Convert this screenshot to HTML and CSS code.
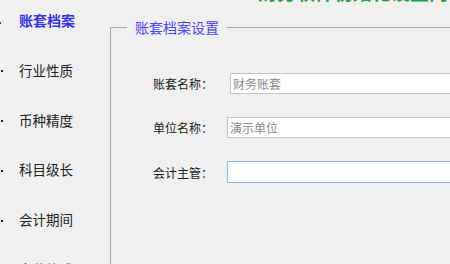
FILE: index.html
```html
<!DOCTYPE html>
<html lang="zh-CN">
<head>
<meta charset="utf-8">
<link rel="stylesheet" href="styles.css">
</head>
<body>
<div class="page">
  <div class="banner">财务软件初始化设置向导</div>
  <div class="main">
    <ul class="nav">
      <li class="nav-item active"><span class="dot"></span><span class="nav-text">账套档案</span></li>
      <li class="nav-item"><span class="dot"></span><span class="nav-text">行业性质</span></li>
      <li class="nav-item"><span class="dot"></span><span class="nav-text">币种精度</span></li>
      <li class="nav-item"><span class="dot"></span><span class="nav-text">科目级长</span></li>
      <li class="nav-item"><span class="dot"></span><span class="nav-text">会计期间</span></li>
      <li class="nav-item"><span class="dot"></span><span class="nav-text">文件格式</span></li>
    </ul>
    <fieldset class="group">
      <legend class="group-title">账套档案设置</legend>
      <div class="form">
        <label class="label">账套名称：</label>
        <input class="field field-a" type="text" placeholder="财务账套">
        <label class="label">单位名称：</label>
        <input class="field" type="text" placeholder="演示单位">
        <label class="label">会计主管：</label>
        <input class="field focused" type="text">
      </div>
    </fieldset>
  </div>
</div>
</body>
</html>
```
FILE: styles.css
```css
html, body {
  margin: 0;
  padding: 0;
  background: #f0f0f0;
  overflow: hidden;
  font-family: "Noto Sans CJK SC", "Microsoft YaHei", sans-serif;
}
.page {
  width: 450px;
  height: 264px;
  overflow: hidden;
  display: flex;
  flex-direction: column;
}
.banner {
  flex: none;
  height: 20px;
  margin-top: -18px;
  margin-left: 258px;
  font-size: 19px;
  line-height: 20px;
  font-weight: bold;
  color: #1ea03c;
  white-space: nowrap;
}
.main {
  display: flex;
  align-items: flex-start;
}
.nav {
  list-style: none;
  margin: 8px 0 0 0;
  padding: 0;
  width: 110px;
  flex: none;
  display: flex;
  flex-direction: column;
  gap: 29.75px;
}
.nav-item {
  display: flex;
  align-items: center;
  height: 20px;
  font-size: 13.5px;
  color: #222;
}
.dot {
  width: 2px;
  height: 2px;
  background: #222;
  margin-left: 1px;
  margin-right: 16px;
  margin-top: 3px;
}
.nav-item.active {
  color: #3232f5;
  font-weight: bold;
  font-size: 14px;
}
.nav-item.active .dot {
  background: #3232f5;
  margin-left: -1px;
  margin-right: 18px;
  margin-top: 5px;
}
.group {
  flex: 1;
  margin: 16px -20px 0 0;
  padding: 0 0 0 42px;
  border: 1px solid #a8a8a8;
  border-right: none;
  min-width: 0;
  height: 400px;
}
.group-title {
  margin-left: -26px;
  padding: 0 7px 0 8px;
  font-size: 14px;
  line-height: 18px;
  color: #4646ff;
}
.form {
  margin-top: 37px;
  display: grid;
  grid-template-columns: 74px 1fr;
  row-gap: 23px;
  align-items: center;
}
.label {
  font-size: 12px;
  color: #1a1a1a;
  line-height: 21px;
}
.field {
  height: 21px;
  box-sizing: border-box;
  border: 1px solid #c4c4c4;
  background: #fff;
  font-family: inherit;
  font-size: 12px;
  padding: 0 2px;
  margin: 0;
  outline: none;
}
.field::placeholder {
  color: #8a8a8a;
}
.field-a {
  margin-left: 3px;
}
.focused {
  height: 22px;
  border-color: #86b6e6;
}
```
